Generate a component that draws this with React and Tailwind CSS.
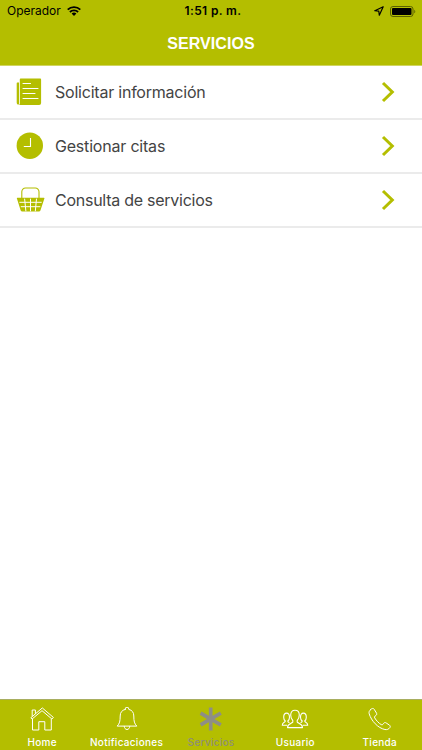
import { useState } from 'react'

const services = [
  { label: 'Solicitar información', icon: DocumentIcon, tracking: 'tracking-[-0.22px]' },
  { label: 'Gestionar citas', icon: ClockIcon, tracking: 'tracking-[-0.2px]' },
  { label: 'Consulta de servicios', icon: BasketIcon, tracking: 'tracking-[-0.26px]' },
]

const tabs = [
  { label: 'Home', icon: HomeIcon },
  { label: 'Notificaciones', icon: BellIcon },
  { label: 'Servicios', icon: AsteriskIcon },
  { label: 'Usuario', icon: UsersIcon },
  { label: 'Tienda', icon: PhoneIcon },
]

function DocumentIcon() {
  return (
    <svg className="w-7 h-7" viewBox="0 0 28 28" fill="none">
      <path d="M.7 5.200a.6.6 0 0 1 .6-.6H3v21.600c0 .6-2.300.6-2.300-1.500z" fill="#b4be00" />
      <path d="M3.800 1.400a.8.8 0 0 1 .8-.8h19.700a.8.8 0 0 1 .8.800v23.600a2 2 0 0 1-2 2H2.600c.8-.2 1.200-.8 1.200-1.600z" fill="#b4be00" />
      <path d="M7 5.500h7.500M7 10.500h15M7 15.500h12M7 20.500h15" stroke="#fff" strokeWidth="1.100" strokeLinecap="round" />
    </svg>
  )
}

function ClockIcon() {
  return (
    <svg className="w-7 h-7" viewBox="0 0 28 28" fill="none">
      <circle cx="13.8" cy="13.7" r="13.2" fill="#b4be00" />
      <path d="M14.5 6v8.500H7.800" stroke="#fff" strokeWidth="1.1" />
    </svg>
  )
}

function BasketIcon() {
  return (
    <svg className="w-7 h-7 overflow-visible" viewBox="0 0 28 28" fill="none">
      <path d="M5.800 12.500V5.700a3.700 3.700 0 0 1 3.700-3.700h9.800A3.700 3.700 0 0 1 23 5.700v6.800" stroke="#b4be00" strokeWidth="1.1" />
      <path d="M1.600 11.700h26.200a.6.6 0 0 1 .6.900l-4 11.800a1.700 1.700 0 0 1-1.500 1.100H6.200a1.700 1.700 0 0 1-1.500-1.100L.9 12.600a.6.6 0 0 1 .7-.9z" fill="#b4be00" />
      <path d="M3.400 16.300h22.300M4.800 20.700h19.500M8.600 12.700l1.300 12.600M14.500 12.700v12.600M20.500 12.700l-1.200 12.600" stroke="#fff" strokeWidth="1" />
    </svg>
  )
}

function HomeIcon() {
  return (
    <svg className="w-6 h-6" viewBox="0 0 24 24" fill="none" stroke="#fff" strokeWidth="1" strokeLinejoin="round" strokeLinecap="round">
      <path d="M2.500 12.300v10.700h6.300v-8.300h6v8.300h6.500V12.300" />
      <path d="M12 1.200L.9 10.700l1.200 1.300L12 3.700l9.900 8.300 1.200-1.300z" />
      <path d="M2.200 9V3h3.200v3.400" />
    </svg>
  )
}

function BellIcon() {
  return (
    <svg className="w-6 h-6" viewBox="0 0 24 24" fill="none" stroke="#fff" strokeWidth="1" strokeLinejoin="round" strokeLinecap="round">
      <path d="M10.200 2.400V2a1.800 1.800 0 0 1 3.600 0v.4c3.400.8 5 3.100 5 6.600 0 5.200.6 7.700 3 10.100H2.200c2.400-2.400 3-4.900 3-10.100 0-3.500 1.600-5.800 5-6.600z" />
      <path d="M9.200 19.300c.2 2 1.300 3.200 2.800 3.200s2.600-1.200 2.800-3.200" />
    </svg>
  )
}

function AsteriskIcon() {
  return (
    <svg className="w-6 h-6" viewBox="0 0 24 24" fill="none" stroke="#8e8e86" strokeWidth="3.7">
      <path d="M11.700.6v22.800M1.600 6.200l20.200 11.600M21.800 6.200L1.600 17.800" />
    </svg>
  )
}

function UsersIcon() {
  return (
    <svg className="w-7 h-6" viewBox="0 0 28 24" fill="none" stroke="#fff" strokeWidth="1.100" strokeLinejoin="round" strokeLinecap="round">
      <path d="M11.800 13.500c-1.300-1.300-2.100-3.200-2.100-5.400 0-3.200 1.500-4.800 4.300-4.800s4.300 1.600 4.300 4.800c0 2.200-.8 4.100-2.100 5.400v1.500c.4 1.500 5.300 1.400 5.300 5.600h-15c0-4.200 4.900-4.100 5.300-5.600z" />
      <path d="M8 15.500c-1-.4-1.200-.8-1.200-1.500 1.100-.9 1.700-2.100 1.700-3.800 0-2.500-.9-4.100-2.900-4.100s-2.900 1.600-2.900 4.100c0 1.700.5 2.900 1.600 3.800 0 1.600-3 .9-3 4.300h4.600" />
      <path d="M20 15.500c1-.4 1.200-.8 1.200-1.500-1.100-.9-1.700-2.100-1.700-3.800 0-2.500.9-4.100 2.900-4.100s2.900 1.600 2.900 4.100c0 1.700-.5 2.900-1.600 3.800 0 1.600 3 .9 3 4.300h-4.600" />
    </svg>
  )
}

function PhoneIcon() {
  return (
    <svg className="w-6 h-6" viewBox="0 0 24 24" fill="none" stroke="#fff" strokeWidth="1" strokeLinejoin="round" strokeLinecap="round">
      <path d="M2.300 2.900l1.500-1.200c.9-.5 1.900-.2 2.400.6l2.300 3.800c.5.9.2 1.900-.6 2.400l-1 .7c-.5.4-.6 1-.2 1.700 1.800 2.900 4 5.200 6.500 6.700.7.4 1.300.3 1.700-.2l.8-1.100c.6-.8 1.600-1 2.400-.4l3.400 2.300c.8.600 1 1.600.4 2.400-1.300 1.700-2.900 2.300-5 1.900C10 21.200 3.200 13.700 1.200 6.800c-.4-1.600-.1-3 1.100-3.900z" />
    </svg>
  )
}

function StatusBar() {
  return (
    <div className="grid grid-cols-3 items-center h-[22px] pl-[7px] pr-1.5 text-black">
      <div className="flex items-center gap-1.5">
        <span className="text-[12px] leading-none">Operador</span>
        <svg className="w-3.5 h-2.5" viewBox="0 0 14 10" fill="none" stroke="#000" strokeWidth="1.8">
          <path d="M.7 3.600a9 9 0 0 1 12.600 0M2.900 6a5.800 5.800 0 0 1 8.200 0" />
          <path d="M4.600 7.600a3.400 3.400 0 0 1 4.800 0L7 10z" fill="#000" stroke="none" />
        </svg>
      </div>
      <span className="pl-[3px] text-center text-[12px] leading-none font-semibold tracking-[0.35px]">1:51 p. m.</span>
      <div className="flex items-center justify-end gap-1.5">
        <svg className="w-2.5 h-2.5" viewBox="0 0 10 10" fill="none" stroke="#000" strokeWidth="1.2" strokeLinejoin="round">
          <path d="M9.200.8L.8 4.700l4 .5.500 4z" />
        </svg>
        <svg className="w-[26px] h-[11px]" viewBox="0 0 26 11" fill="none">
          <rect x=".5" y=".5" width="22.5" height="10" rx="2.5" stroke="#5a6000" />
          <rect x="2" y="2" width="19.5" height="7" rx="1" fill="#000" />
          <path d="M24.300 3.700c1.300.5 1.300 3.100 0 3.600z" fill="#5a6000" />
        </svg>
      </div>
    </div>
  )
}

export default function App() {
  const [activeTab, setActiveTab] = useState('Servicios')

  return (
    <main className="flex flex-col h-screen bg-white font-['Inter','Liberation_Sans',sans-serif]">
      <header className="h-[66px] bg-[#b4be00] border-b border-[#d0d560]">
        <StatusBar />
        <h1 className="text-center text-white font-bold text-[16px] tracking-[0.1px] leading-[43px] font-['Liberation_Sans',sans-serif]">SERVICIOS</h1>
      </header>

      <ul className="flex-1">
        {services.map(({ label, icon: Icon, tracking }) => (
          <li key={label} className="h-[54px] border-b-2 border-[#ebebeb]">
            <button className="flex items-center w-full h-full pl-4 pr-[27px]">
              <Icon />
              <span className={`ml-[11px] flex-1 text-left text-[16px] text-[#444] ${tracking}`}>{label}</span>
              <svg className="w-3.5 h-[22px]" viewBox="0 0 14 22" fill="none" stroke="#b4be00" strokeWidth="3">
                <path d="M2 2l9.300 9L2 20" />
              </svg>
            </button>
          </li>
        ))}
      </ul>

      {/* Bottom tabs */}
      <nav className="grid grid-cols-5 h-[51px] bg-[#b4be00] border-t border-[#a8ae60]">
        {tabs.map(({ label, icon: Icon }) => (
          <button
            key={label}
            onClick={() => setActiveTab(label)}
            className={`flex flex-col items-center pt-[7px] ${activeTab === label ? 'text-[#8e8e76]' : 'text-white'}`}
          >
            <Icon />
            <span className="mt-[5px] text-[10px] leading-[12px] font-medium tracking-[0.3px]">{label}</span>
          </button>
        ))}
      </nav>
    </main>
  )
}
